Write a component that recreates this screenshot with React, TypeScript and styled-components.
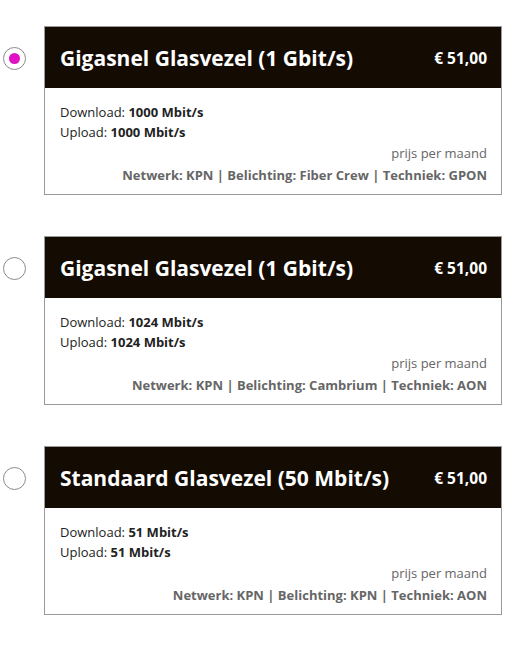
import React, { useState } from 'react';
import styled, { createGlobalStyle } from 'styled-components';

const GlobalStyle = createGlobalStyle`
	body {
		margin: 0;
		background: #ffffff;
		font-family: 'Open Sans', 'Noto Sans', sans-serif;
		color: #222222;
	}
`;

interface Offer {
	title: string;
	price: string;
	download: string;
	upload: string;
	network: string;
	lighting: string;
	technique: string;
}

const offers: Offer[] = [
	{
		title: 'Gigasnel Glasvezel (1 Gbit/s)',
		price: '€ 51,00',
		download: '1000 Mbit/s',
		upload: '1000 Mbit/s',
		network: 'KPN',
		lighting: 'Fiber Crew',
		technique: 'GPON',
	},
	{
		title: 'Gigasnel Glasvezel (1 Gbit/s)',
		price: '€ 51,00',
		download: '1024 Mbit/s',
		upload: '1024 Mbit/s',
		network: 'KPN',
		lighting: 'Cambrium',
		technique: 'AON',
	},
	{
		title: 'Standaard Glasvezel (50 Mbit/s)',
		price: '€ 51,00',
		download: '51 Mbit/s',
		upload: '51 Mbit/s',
		network: 'KPN',
		lighting: 'KPN',
		technique: 'AON',
	},
];

const List = styled.div`
	display: flex;
	flex-direction: column;
	gap: 41px;
	padding: 26px 15px 0 3px;
`;

const Row = styled.label`
	display: flex;
	align-items: flex-start;
	cursor: pointer;
`;

const RadioCol = styled.div`
	width: 41px;
	flex-shrink: 0;
	padding-top: 21px;
`;

const Radio = styled.span<{ checked: boolean }>`
	display: flex;
	align-items: center;
	justify-content: center;
	width: 23px;
	height: 23px;
	box-sizing: border-box;
	border: 1px solid #8a8a8a;
	border-radius: 50%;
	background: #ffffff;
	&::after {
		content: '';
		width: 11px;
		height: 11px;
		border-radius: 50%;
		background: ${(props) => (props.checked ? '#e012c4' : 'transparent')};
	}
`;

const Card = styled.div`
	flex: 1;
	border: 1px solid #9a9a9a;
`;

const Header = styled.div`
	display: flex;
	align-items: center;
	justify-content: space-between;
	height: 61px;
	padding: 0 14px 0 15px;
	background: #140c03;
	color: #ffffff;
`;

const Title = styled.h2`
	margin: 0;
	font-size: 21px;
	font-weight: 700;
`;

const Price = styled.span`
	font-size: 15.5px;
	font-weight: 700;
`;

const Body = styled.div`
	padding: 14px 14px 9px 15px;
	font-size: 13px;
	line-height: 20px;
`;

const Spec = styled.div`
	color: #222222;
	b {
		font-weight: 700;
	}
`;

const Meta = styled.div`
	margin-top: 1px;
	text-align: right;
	color: #666666;
`;

const Details = styled.div`
	margin-top: 2px;
	text-align: right;
	color: #666666;
	font-weight: 700;
`;

const App = () => {
	const [selected, setSelected] = useState(0);
	return (
		<>
			<GlobalStyle />
			<List>
				{offers.map((offer, id) => (
					<Row key={id} onClick={() => setSelected(id)}>
						<RadioCol>
							<Radio checked={selected === id} />
						</RadioCol>
						<Card>
							<Header>
								<Title>{offer.title}</Title>
								<Price>{offer.price}</Price>
							</Header>
							<Body>
								<Spec>
									Download: <b>{offer.download}</b>
								</Spec>
								<Spec>
									Upload: <b>{offer.upload}</b>
								</Spec>
								<Meta>prijs per maand</Meta>
								<Details>
									Netwerk: {offer.network} | Belichting: {offer.lighting} |
									Techniek: {offer.technique}
								</Details>
							</Body>
						</Card>
					</Row>
				))}
			</List>
		</>
	);
};

export default App;
